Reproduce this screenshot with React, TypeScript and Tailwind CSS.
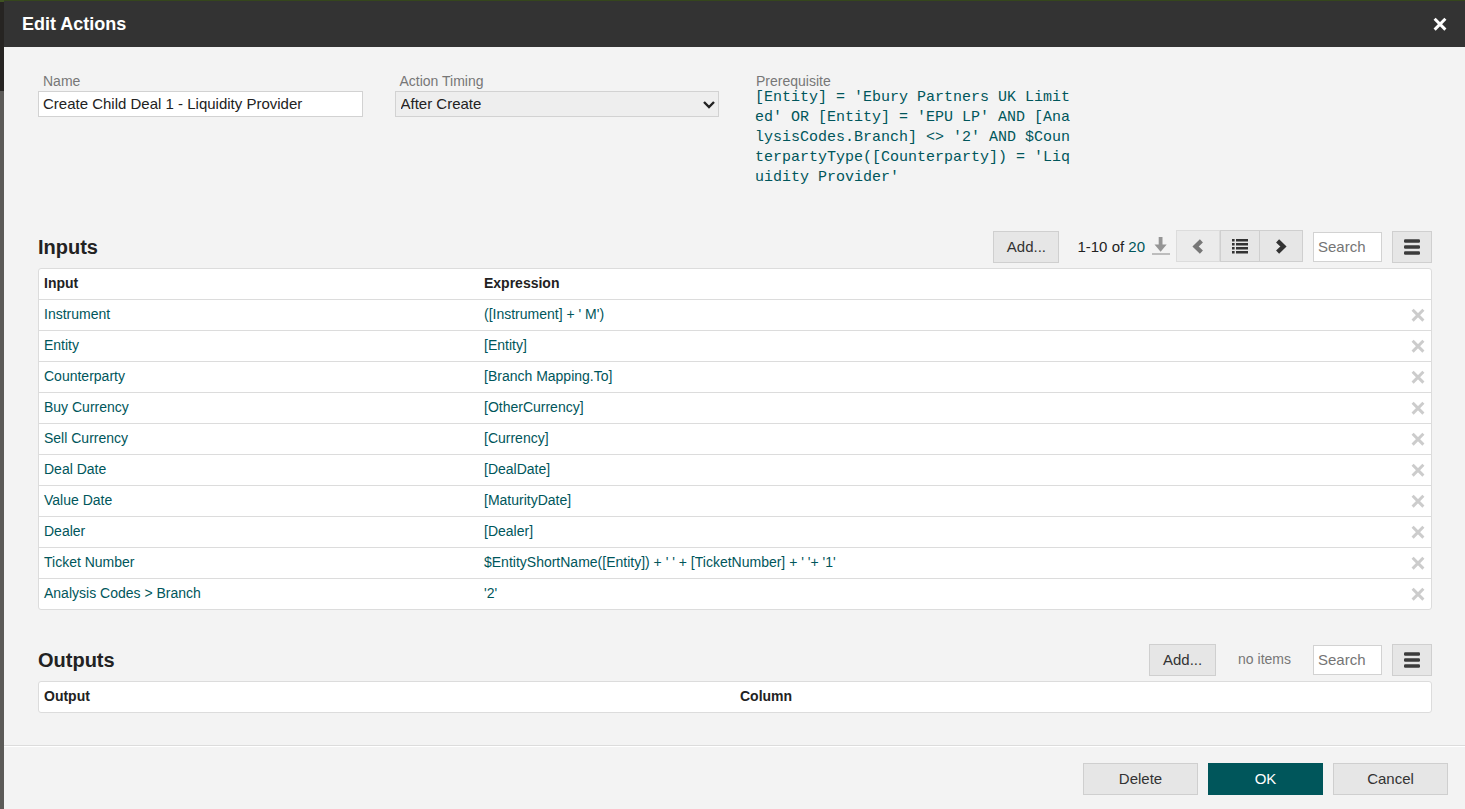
import React from 'react';

const INPUT_ROWS = [
  { input: 'Instrument', expression: "([Instrument] + ' M')" },
  { input: 'Entity', expression: '[Entity]' },
  { input: 'Counterparty', expression: '[Branch Mapping.To]' },
  { input: 'Buy Currency', expression: '[OtherCurrency]' },
  { input: 'Sell Currency', expression: '[Currency]' },
  { input: 'Deal Date', expression: '[DealDate]' },
  { input: 'Value Date', expression: '[MaturityDate]' },
  { input: 'Dealer', expression: '[Dealer]' },
  { input: 'Ticket Number', expression: "$EntityShortName([Entity]) + ' ' + [TicketNumber] + ' '+ '1'" },
  { input: 'Analysis Codes > Branch', expression: "'2'" },
];

const PREREQUISITE =
  "[Entity] = 'Ebury Partners UK Limited' OR [Entity] = 'EPU LP' AND [AnalysisCodes.Branch] <> '2' AND $CounterpartyType([Counterparty]) = 'Liquidity Provider'";

const CrossIcon: React.FC<{ className?: string }> = ({ className }) => (
  <svg viewBox="0 0 14 14" className={className} fill="none" stroke="currentColor" strokeWidth="3" aria-hidden="true">
    <path d="M1.6 1.8l10.8 10.8M12.4 1.8L1.6 12.6" />
  </svg>
);

const ChevronIcon: React.FC<{ className?: string; direction: 'left' | 'right' }> = ({ className, direction }) => (
  <svg viewBox="0 0 12 16" className={className} fill="none" stroke="currentColor" strokeWidth="4.4" aria-hidden="true">
    <path d={direction === 'left' ? 'M9.4 2.9L3.6 8.5l5.8 5.6' : 'M2.6 2.9l5.8 5.6-5.8 5.6'} />
  </svg>
);

const ListIcon = () => (
  <svg viewBox="0 0 16 16" className="h-4 w-4" fill="currentColor" aria-hidden="true">
    <path d="M0 1h2.6v2.6H0zM4 1h12v2.6H4zM0 5h2.6v2.6H0zM4 5h12v2.6H4zM0 9h2.6v2.6H0zM4 9h12v2.6H4zM0 13h2.6v2.6H0zM4 13h12v2.6H4z" />
  </svg>
);

const MenuIcon = () => (
  <svg viewBox="0 0 16 16" className="h-4 w-4" fill="#3b3b3b" aria-hidden="true">
    <rect x="0" y="0.2" width="16" height="3.6" rx="1.2" />
    <rect x="0" y="6.2" width="16" height="3.6" rx="1.2" />
    <rect x="0" y="12.2" width="16" height="3.6" rx="1.2" />
  </svg>
);

const DownloadIcon = () => (
  <svg viewBox="0 0 18 20" className="h-5 w-[18px]" aria-hidden="true">
    <path d="M6.7 0h3.8v7.6h4.2L8.6 14.8 2.5 7.6h4.2z" fill="#959595" />
    <path d="M0 16h18v2H0z" fill="#bdbdbd" />
  </svg>
);

const buttonClass = 'h-8 border border-[#cfcfcf] bg-[#e6e6e6] text-[#333]';

const SearchBox: React.FC<{ label: string }> = ({ label }) => (
  <input
    type="text"
    placeholder="Search"
    aria-label={label}
    className="h-[30px] w-[69px] border border-[#d2d2d2] bg-white px-1 pb-[2px] text-[15px] placeholder:text-[#757575]"
  />
);

const MenuButton: React.FC<{ label: string }> = ({ label }) => (
  <button type="button" aria-label={label} className={`${buttonClass} flex w-10 items-center justify-center`}>
    <MenuIcon />
  </button>
);

const App: React.FC = () => {
  return (
    <div className="flex min-h-screen bg-[linear-gradient(#3f5222_2px,#262422_2px,#262422_91px,#5b5a57_91px)] pl-1 font-['Liberation_Sans',Arial,sans-serif] text-[15px] text-[#222]">
      <div role="dialog" aria-labelledby="dialog-title" className="flex flex-1 flex-col bg-[#f3f3f3]">
        <header className="flex h-[47px] items-center justify-between border-t border-[#35461c] bg-[#333] pr-[18px] pl-[18px] text-white">
          <h1 id="dialog-title" className="text-[18px] font-bold">Edit Actions</h1>
          <button type="button" aria-label="Close">
            <CrossIcon className="h-[14px] w-[14px]" />
          </button>
        </header>

        <main className="flex-1 pr-[33px] pl-[34px]">
          {/* Action fields */}
          <div className="grid h-[183px] grid-cols-4 gap-8 pt-[26px]">
            <div className="flex flex-col">
              <label htmlFor="name" className="h-[18px] pl-[5px] text-sm leading-4 text-[#777]">Name</label>
              <input
                id="name"
                type="text"
                defaultValue="Create Child Deal 1 - Liquidity Provider"
                className="h-[26px] w-full border border-[#d2d2d2] bg-white px-1 pb-[2px]"
              />
            </div>
            <div className="flex flex-col">
              <label htmlFor="timing" className="h-[18px] pl-[5px] text-sm leading-4 text-[#777]">Action Timing</label>
              <div className="relative">
                <select id="timing" className="h-[26px] w-full appearance-none border border-[#d2d2d2] bg-[#eee] px-[5px]">
                  <option>After Create</option>
                </select>
                <svg viewBox="0 0 12 8" className="pointer-events-none absolute top-[10px] right-1 h-2 w-3" fill="none" stroke="#222" strokeWidth="2.4" aria-hidden="true">
                  <path d="M1 1l5 5 5-5" />
                </svg>
              </div>
            </div>
            <div className="flex flex-col">
              <span className="h-[15px] pl-[5px] text-sm leading-4 text-[#777]">Prerequisite</span>
              <code className="pr-1 pl-1 font-['Liberation_Mono','Courier_New',monospace] text-[15px] leading-5 break-all text-[#00565b]">
                {PREREQUISITE}
              </code>
            </div>
          </div>

          {/* Inputs */}
          <section>
            <div className="flex h-[38px] items-start justify-between">
              <h2 className="pt-[3px] text-xl leading-7 font-bold">Inputs</h2>
              <div className="flex h-[34px] items-center">
                <button type="button" className={`${buttonClass} w-[66px]`}>Add...</button>
                <span className="ml-[18px]">
                  1-10 of <a href="#all" className="text-[#00565b]">20</a>
                </span>
                <button type="button" aria-label="Download" className="ml-[7px]">
                  <DownloadIcon />
                </button>
                <div className="ml-[6px] flex self-start">
                  <button type="button" aria-label="Previous page" className="flex h-8 w-11 items-center justify-center border border-[#dcdcdc] bg-[#ebebeb] text-[#777]">
                    <ChevronIcon direction="left" className="h-4 w-3" />
                  </button>
                  <button type="button" aria-label="Show list" className={`${buttonClass} flex w-10 items-center justify-center`}>
                    <ListIcon />
                  </button>
                  <button type="button" aria-label="Next page" className={`${buttonClass} flex w-[43px] items-center justify-center border-l-0`}>
                    <ChevronIcon direction="right" className="h-4 w-3" />
                  </button>
                </div>
                <div className="ml-[10px] flex items-center gap-[10px]">
                  <SearchBox label="Search inputs" />
                  <MenuButton label="Inputs menu" />
                </div>
              </div>
            </div>
            <div className="overflow-hidden rounded-[3px] border border-[#dcdcdc] bg-white">
              <table className="w-full table-fixed text-left text-sm">
                <thead>
                  <tr className="h-[30px]">
                    <th className="w-[440px] px-[5px] pb-[2px]">Input</th>
                    <th className="px-[5px] pb-[2px]">Expression</th>
                    <th className="w-10" aria-label="Remove" />
                  </tr>
                </thead>
                <tbody className="text-[#00565b]">
                  {INPUT_ROWS.map((row) => (
                    <tr key={row.input} className="h-[31px] border-t border-[#dcdcdc]">
                      <td className="px-[5px] pb-[2px]">{row.input}</td>
                      <td className="px-[5px] pb-[2px]">{row.expression}</td>
                      <td className="pr-[6px]">
                        <button type="button" aria-label={`Remove ${row.input}`} className="ml-auto block text-[#ccc]">
                          <CrossIcon className="h-[14px] w-[14px]" />
                        </button>
                      </td>
                    </tr>
                  ))}
                </tbody>
              </table>
            </div>
          </section>

          {/* Outputs */}
          <section className="mt-[33px]">
            <div className="flex h-[38px] items-start justify-between">
              <h2 className="pt-[3px] text-xl leading-7 font-bold">Outputs</h2>
              <div className="flex h-[34px] items-center">
                <button type="button" className={`${buttonClass} w-[67px]`}>Add...</button>
                <span className="ml-[22px] pb-[2px] text-sm text-[#777]">no items</span>
                <div className="ml-[22px] flex items-center gap-[10px]">
                  <SearchBox label="Search outputs" />
                  <MenuButton label="Outputs menu" />
                </div>
              </div>
            </div>
            <div className="overflow-hidden rounded-[3px] border border-[#dcdcdc] bg-white">
              <table className="w-full table-fixed text-left text-sm">
                <thead>
                  <tr className="h-[30px]">
                    <th className="px-[5px] pb-[2px]">Output</th>
                    <th className="px-[5px] pb-[2px]">Column</th>
                  </tr>
                </thead>
              </table>
            </div>
          </section>
        </main>

        <footer className="border-t border-[#dcdcdc]">
          <div className="flex justify-end gap-[10px] border-t border-white pt-4 pr-[17px] pb-[14px]">
            <button type="button" className={`${buttonClass} w-[115px]`}>Delete</button>
            <button type="button" className="h-8 w-[115px] bg-[#00565b] text-white">OK</button>
            <button type="button" className={`${buttonClass} w-[115px]`}>Cancel</button>
          </div>
        </footer>
      </div>
    </div>
  );
};

export default App;
